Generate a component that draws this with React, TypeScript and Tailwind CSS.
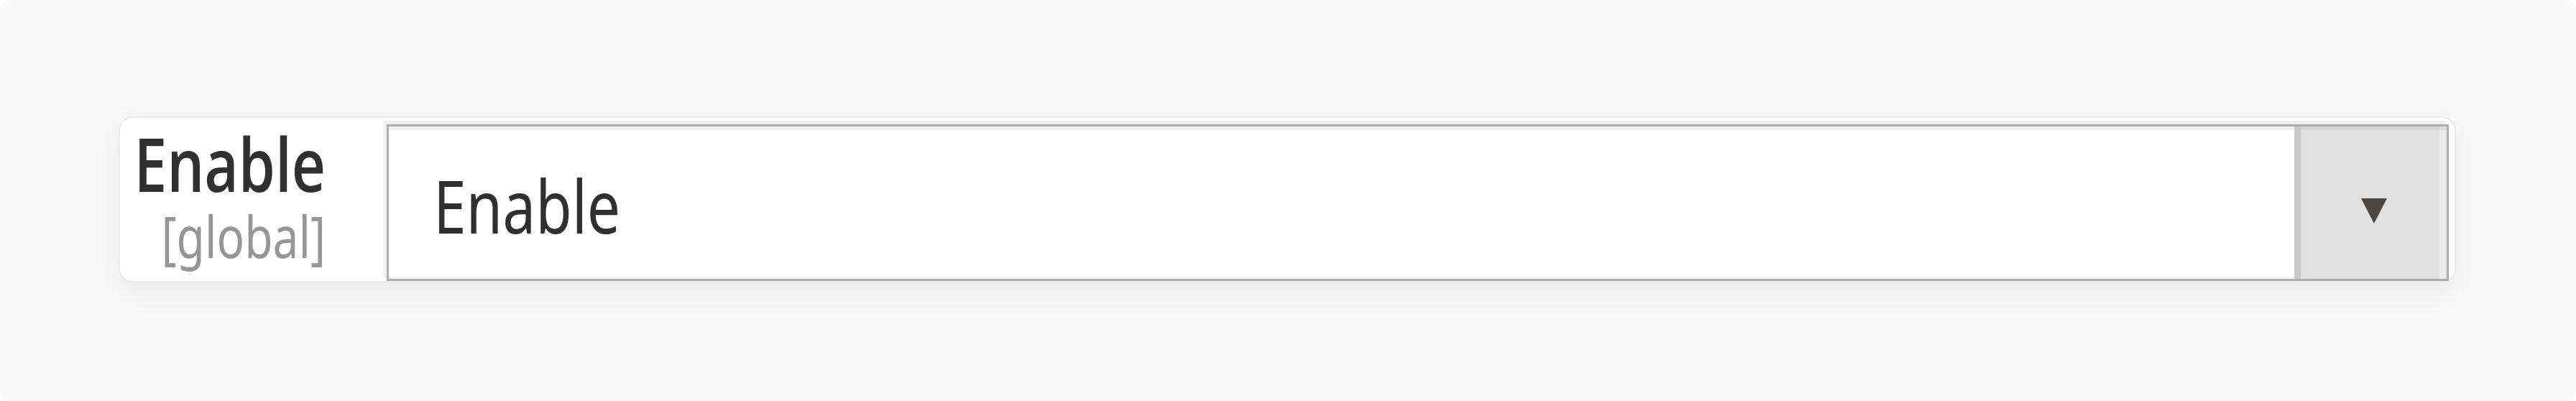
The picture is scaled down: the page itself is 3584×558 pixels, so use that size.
import { useState } from 'react';

const font = { fontFamily: '"Noto Sans", "Open Sans", sans-serif' };
const labelFont = { fontFamily: '"Open Sans", "Noto Sans", sans-serif' };

export default function App() {
  const [value] = useState('Enable');

  return (
    <div className="w-full h-[558px] bg-white" style={font}>
      <div className="h-full rounded-[16px] bg-[#f9f9f9] pt-[162px] pl-[165px] pr-[167px]">
        <div className="flex h-[231px] rounded-[20px] border-2 border-[#ececec] bg-white pt-[9px] pr-[8px] shadow-[0_12px_40px_rgba(0,0,0,0.07)]">
          {/* label + scope */}
          <div className="w-[371px] shrink-0 flex flex-col items-end pt-[13px] pr-[85px]">
            <span className="block text-[82px] leading-[82px] font-semibold text-[#303030] scale-y-125" style={labelFont}>
              Enable
            </span>
            <span className="block mt-[29px] text-[64px] leading-[64px] text-[#969696] scale-y-125">
              [global]
            </span>
          </div>

          {/* select */}
          <div className="flex flex-1 border-[3px] border-[#adadad] bg-white shadow-[-5px_-5px_0_#f0f0f0]">
            <div className="flex flex-1 items-center pl-[62px] pt-[5px] shadow-[inset_0_5px_0_rgba(0,0,0,0.05),inset_0_-4px_0_rgba(0,0,0,0.04)]">
              <span className="block text-[82px] leading-[82px] text-[#303030] scale-y-125">{value}</span>
            </div>
            <div className="w-[212px] flex items-center justify-center border-l-[9px] border-[#c9c9c9] bg-[#e1e1e1] shadow-[inset_0_5px_0_rgba(0,0,0,0.05),inset_-10px_0_0_rgba(255,255,255,0.3)]">
              <svg width="38" height="38" viewBox="0 0 38 38" className="mt-[22px]">
                <polygon points="1,2 37,2 19,37" fill="#4d4640" />
              </svg>
            </div>
          </div>
        </div>
      </div>
    </div>
  );
}
